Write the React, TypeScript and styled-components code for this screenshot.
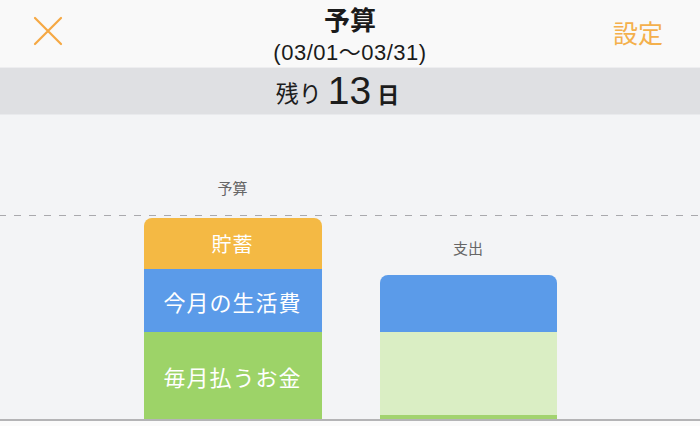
import styled, { createGlobalStyle } from "styled-components";

const GlobalStyle = createGlobalStyle`
  html, body {
    margin: 0;
    padding: 0;
    background: #f3f4f6;
    font-family: "Noto Sans CJK JP", "Noto Sans", sans-serif;
  }
`;

const Screen = styled.div`
  width: 700px;
  height: 426px;
  overflow: hidden;
  background: #fafafa;
  display: flex;
  flex-direction: column;
`;

const Header = styled.div`
  height: 67px;
  border-bottom: 1px solid #eeeef0;
  background: #f9f9f9;
  display: grid;
  grid-template-columns: 120px 1fr 120px;
  align-items: center;
`;

const CloseButton = styled.div`
  padding-left: 33px;
  display: flex;
  align-items: center;
  margin-top: -5px;
`;

const TitleBlock = styled.div`
  align-self: start;
  display: flex;
  flex-direction: column;
  align-items: center;
  color: #1b1b1b;
`;

const Title = styled.div`
  font-size: 26px;
  font-weight: 700;
  line-height: 38px;
`;

const Period = styled.div`
  margin-top: 2px;
  font-size: 22px;
  line-height: 26px;
  font-family: "Liberation Sans", "Noto Sans CJK JP", sans-serif;
  letter-spacing: 0.5px;
`;

const SettingsLink = styled.div`
  justify-self: end;
  padding-right: 37px;
  color: #f4b04c;
  font-size: 25px;
  margin-top: -4px;
`;

const RemainBar = styled.div`
  height: 46px;
  padding-right: 25px;
  background: #dfe0e3;
  border-bottom: 1px solid #e9eaed;
  display: flex;
  align-items: center;
  justify-content: center;
  color: #1c1c1c;
  gap: 6px;
`;

const RemainText = styled.span<{ big?: boolean; strong?: boolean }>`
  font-size: ${(p) => (p.big ? "39px" : p.strong ? "22px" : "23px")};
  font-family: ${(p) =>
    p.big ? '"Liberation Sans", sans-serif' : '"Noto Sans CJK JP", sans-serif'};
  font-weight: ${(p) => (p.strong ? 700 : 400)};
  line-height: 1;
  margin-top: ${(p) => (p.big ? "-1px" : "3px")};
`;

const Chart = styled.div`
  position: relative;
  flex: 1;
  background: #f3f4f6;
  border-bottom: 2px solid #b4b4b6;
  overflow: hidden;
  display: flex;
  justify-content: center;
  align-items: flex-end;
  gap: 58px;
`;

const GuideLine = styled.div`
  position: absolute;
  left: 0;
  right: 0;
  top: 100px;
  border-top: 1px dashed #a9a9ad;
  border-image: repeating-linear-gradient(
      to right,
      #a9a9ad 0 7px,
      transparent 7px 15px
    )
    1;
`;

const Column = styled.div<{ w: number }>`
  width: ${(p) => p.w}px;
  display: flex;
  flex-direction: column;
  align-items: stretch;
`;

const ColumnLabel = styled.div<{ gap: number }>`
  text-align: center;
  font-size: 15px;
  line-height: 20px;
  color: #666;
  margin-bottom: ${(p) => p.gap}px;
`;

const Bar = styled.div`
  border-radius: 8px 8px 0 0;
  overflow: hidden;
  display: flex;
  flex-direction: column;
`;

const Segment = styled.div<{ h: number; color: string; size?: number }>`
  height: ${(p) => p.h}px;
  background: ${(p) => p.color};
  color: #fff;
  font-size: ${(p) => p.size ?? 22}px;
  letter-spacing: 1px;
  display: flex;
  align-items: center;
  justify-content: center;
`;

const Footer = styled.div`
  height: 5px;
  background: #fbfbfb;
`;

export default function App() {
  return (
    <Screen>
      <GlobalStyle />
      <Header>
        <CloseButton>
          <svg width="30" height="30" viewBox="0 0 30 30">
            <path
              d="M2 2 L28 28 M28 2 L2 28"
              stroke="#f5a843"
              strokeWidth="2.2"
              strokeLinecap="round"
            />
          </svg>
        </CloseButton>
        <TitleBlock>
          <Title>予算</Title>
          <Period>(03/01～03/31)</Period>
        </TitleBlock>
        <SettingsLink>設定</SettingsLink>
      </Header>
      <RemainBar>
        <RemainText>残り</RemainText>
        <RemainText big>13</RemainText>
        <RemainText strong>日</RemainText>
      </RemainBar>
      <Chart>
        <GuideLine />
        <Column w={178}>
          <ColumnLabel gap={20}>予算</ColumnLabel>
          <Bar>
            <Segment h={51} color="#f4b944" size={20}>
              貯蓄
            </Segment>
            <Segment h={63} color="#5b9be9">
              今月の生活費
            </Segment>
            <Segment h={87} color="#9dd368">
              毎月払うお金
            </Segment>
          </Bar>
        </Column>
        <Column w={177}>
          <ColumnLabel gap={17}>支出</ColumnLabel>
          <Bar>
            <Segment h={57} color="#5b9be9" />
            <Segment h={83} color="#daeec4" />
            <Segment h={4} color="#a2d36f" />
          </Bar>
        </Column>
      </Chart>
      <Footer />
    </Screen>
  );
}
